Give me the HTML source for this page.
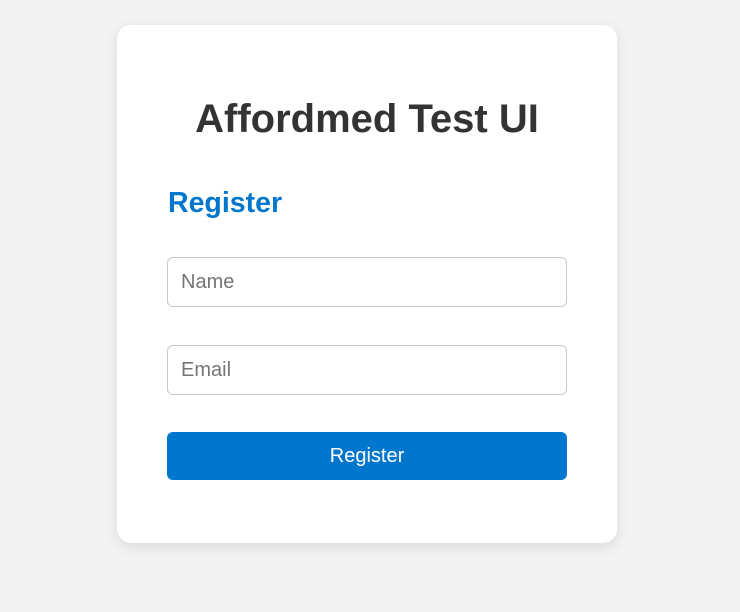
<!DOCTYPE html>
<html><head><meta charset="utf-8"><style>
html,body{margin:0;padding:0;background:#f3f3f3;width:740px;height:612px;overflow:hidden;font-family:"Liberation Sans",sans-serif}
.card{position:absolute;left:117px;top:25px;width:500px;height:518px;background:#fff;border-radius:14px;box-shadow:0 4px 14px rgba(0,0,0,0.1)}
h1{position:absolute;left:0;width:500px;top:72px;margin:0;text-align:center;font-size:40px;font-weight:bold;color:#333;line-height:44px}
h2{position:absolute;left:51px;top:161px;margin:0;font-size:28.5px;color:#0077cc;font-weight:bold;line-height:34px}
.in{position:absolute;left:50px;width:398px;height:48px;border:1px solid #c8c8c8;border-radius:6px;font-size:20px;color:#757575;line-height:48px;text-indent:13px}
.btn{position:absolute;left:50px;top:407px;width:400px;height:48px;background:#0077cc;border-radius:6px;color:#fff;font-size:20px;text-align:center;line-height:48px}
</style></head><body>
<div class="card">
<h1>Affordmed Test UI</h1>
<h2>Register</h2>
<div class="in" style="top:232px">Name</div>
<div class="in" style="top:320px">Email</div>
<div class="btn">Register</div>
</div>
</body></html>
